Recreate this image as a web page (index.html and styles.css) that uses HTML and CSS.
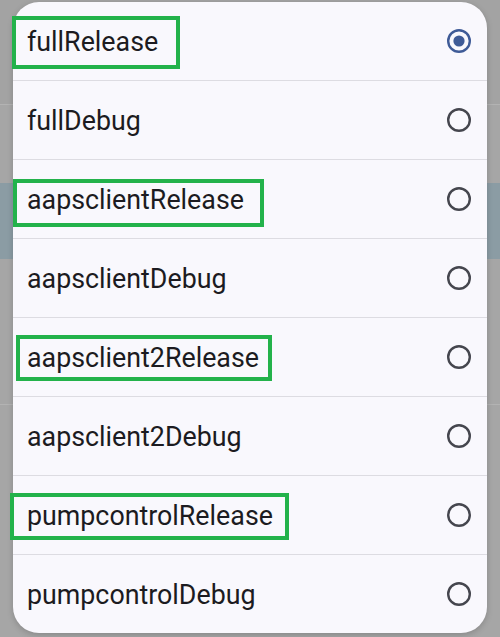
FILE: index.html
```html
<!DOCTYPE html>
<html>
<head>
<meta charset="utf-8">
<link rel="stylesheet" href="styles.css">
</head>
<body>
<div class="backdrop">
  <div class="band band-top"></div>
  <div class="band band-line"></div>
  <div class="band band-mid"></div>
  <div class="band band-blue"></div>
  <div class="band band-grey"></div>
  <div class="band band-line"></div>
  <div class="band band-rest"></div>
</div>
<div class="dialog">
  <div class="row"><span class="label">fullRelease</span>
    <svg class="radio sel" viewBox="0 0 26 26"><circle cx="13" cy="13" r="10.8"/><circle class="dot" cx="13" cy="13" r="5.6"/></svg></div>
  <div class="row"><span class="label">fullDebug</span>
    <svg class="radio" viewBox="0 0 26 26"><circle cx="13" cy="13" r="10.8"/></svg></div>
  <div class="row"><span class="label">aapsclientRelease</span>
    <svg class="radio" viewBox="0 0 26 26"><circle cx="13" cy="13" r="10.8"/></svg></div>
  <div class="row"><span class="label">aapsclientDebug</span>
    <svg class="radio" viewBox="0 0 26 26"><circle cx="13" cy="13" r="10.8"/></svg></div>
  <div class="row"><span class="label">aapsclient2Release</span>
    <svg class="radio" viewBox="0 0 26 26"><circle cx="13" cy="13" r="10.8"/></svg></div>
  <div class="row"><span class="label">aapsclient2Debug</span>
    <svg class="radio" viewBox="0 0 26 26"><circle cx="13" cy="13" r="10.8"/></svg></div>
  <div class="row"><span class="label">pumpcontrolRelease</span>
    <svg class="radio" viewBox="0 0 26 26"><circle cx="13" cy="13" r="10.8"/></svg></div>
  <div class="row"><span class="label">pumpcontrolDebug</span>
    <svg class="radio" viewBox="0 0 26 26"><circle cx="13" cy="13" r="10.8"/></svg></div>
</div>
<div class="mark mark-1"></div>
<div class="mark mark-2"></div>
<div class="mark mark-3"></div>
<div class="mark mark-4"></div>
</body>
</html>
```
FILE: styles.css
```css
html, body {
  margin: 0;
  padding: 0;
}
body {
  width: 500px;
  height: 637px;
  overflow: hidden;
  position: relative;
  background: #a6a6a6;
  font-family: Roboto, "Noto Sans", sans-serif;
}
.backdrop {
  display: flex;
  flex-direction: column;
  height: 637px;
}
.band-top { height: 104px; background: #a3a3a3; }
.band-line { height: 1px; background: #b3b3b3; }
.band-mid { height: 78px; background: #a6a6a6; }
.band-blue { height: 76px; background: #8b9ca4; }
.band-grey { height: 145px; background: #a6a6a6; }
.band-rest { flex: 1; background: #a6a6a6; }

.dialog {
  position: absolute;
  left: 13px;
  top: 2px;
  width: 474px;
  height: 631px;
  background: #f9f8fd;
  border-radius: 26px;
  box-shadow: 0 2px 6px rgba(0,0,0,0.18);
  display: flex;
  flex-direction: column;
  overflow: hidden;
}
.row {
  height: 78px;
  flex: 0 0 78px;
  display: flex;
  align-items: center;
  justify-content: space-between;
  padding: 0 15px 0 14px;
}
.row + .row {
  border-top: 1px solid #dddce2;
}
.label {
  font-size: 26.8px;
  color: #1c1b21;
  padding-top: 2px;
}
.radio {
  width: 26px;
  height: 26px;
}
.radio circle {
  fill: none;
  stroke: #45464e;
  stroke-width: 2.4;
}
.radio.sel circle {
  stroke: #3f5b97;
}
.radio.sel circle.dot {
  fill: #3f5b97;
  stroke: none;
}
.mark {
  position: absolute;
  border: 4px solid #23b24b;
  box-sizing: border-box;
}
.mark-1 { left: 12px; top: 16px; width: 168px; height: 53px; }
.mark-2 { left: 13px; top: 179px; width: 251px; height: 48px; }
.mark-3 { left: 16px; top: 335px; width: 256px; height: 46px; }
.mark-4 { left: 10px; top: 493px; width: 279px; height: 47px; }
```
